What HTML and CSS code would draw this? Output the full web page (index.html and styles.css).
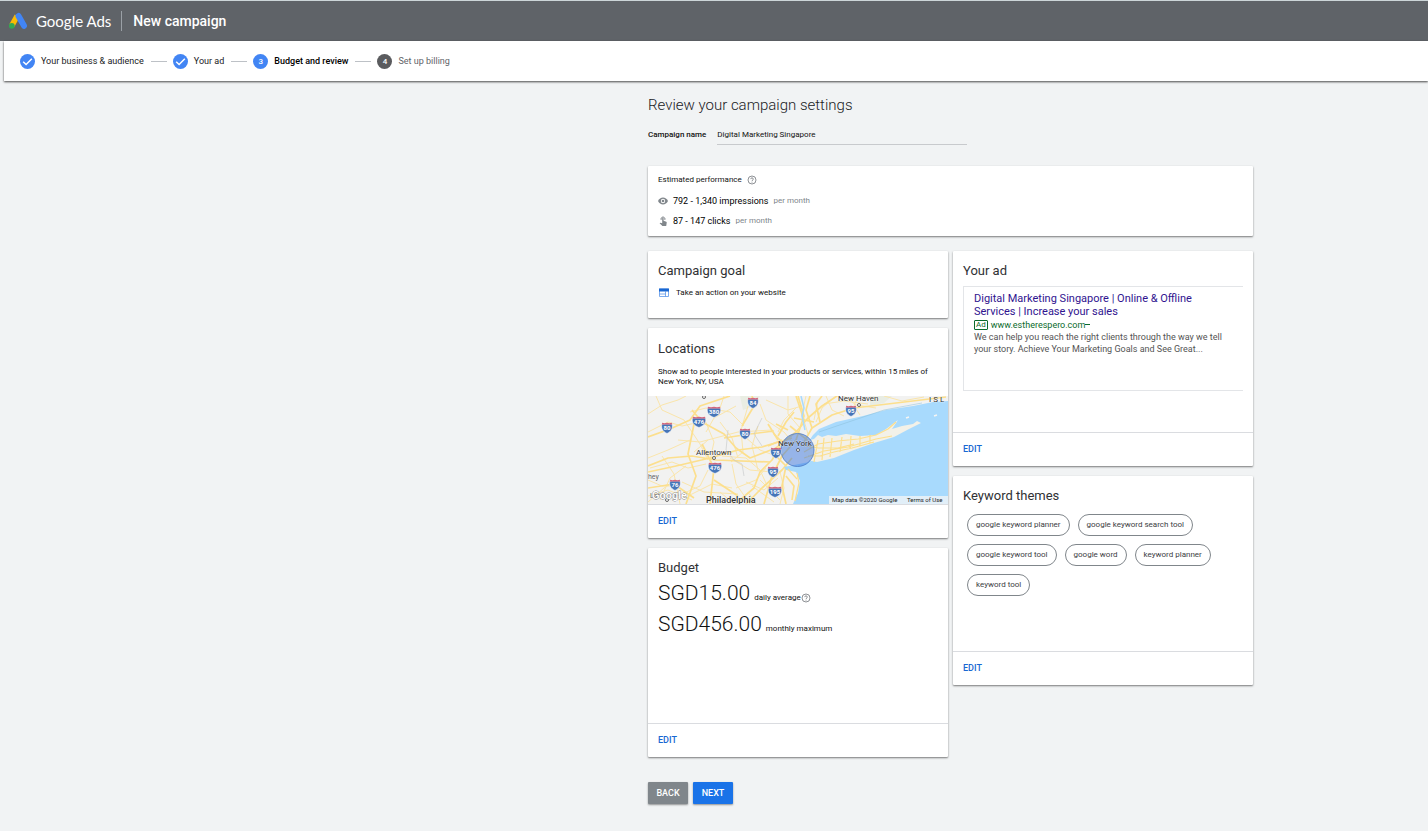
FILE: index.html
```html
<!DOCTYPE html>
<html lang="en">
<head>
  <meta charset="UTF-8" />
  <meta name="viewport" content="width=device-width, initial-scale=1">
  <title>New campaign - Google Ads</title>
  <link rel="stylesheet" href="styles.css">
</head>
<body>

<header class="topbar">
  <svg class="logo" viewBox="0 0 20 18" aria-hidden="true">
    <path d="M9.2 3.8 3.8 13.600" stroke="#fbbc04" stroke-width="5.600" />
    <path d="M10.500 4 16 13.800" stroke="#4285f4" stroke-width="6" stroke-linecap="round" />
    <circle cx="3.8" cy="13.800" r="2.900" fill="#34a853" />
  </svg>
  <span class="brand">Google Ads</span>
  <h1 class="page-title">New campaign</h1>
</header>

<nav class="steps">
  <div class="step">
    <svg class="step-icon" viewBox="0 0 16 16"><circle cx="8" cy="8" r="8" fill="#4285f4" /><path d="M3.4 8.2 6.5 11.2 12.6 5" stroke="#fff" stroke-width="1.6" /></svg>
    <span>Your business &amp; audience</span>
  </div>
  <div class="step">
    <svg class="step-icon" viewBox="0 0 16 16"><circle cx="8" cy="8" r="8" fill="#4285f4" /><path d="M3.4 8.2 6.5 11.2 12.6 5" stroke="#fff" stroke-width="1.6" /></svg>
    <span>Your ad</span>
  </div>
  <div class="step current">
    <span class="step-number">3</span>
    <span>Budget and review</span>
  </div>
  <div class="step next">
    <span class="step-number">4</span>
    <span>Set up billing</span>
  </div>
</nav>

<main class="review">
  <h2 class="review-title">Review your campaign settings</h2>

  <div class="name-row">
    <label for="campaignName">Campaign name</label>
    <input type="text" id="campaignName" value="Digital Marketing Singapore">
  </div>

  <section class="card performance">
    <p class="performance-title">Estimated performance
      <svg class="help" viewBox="0 0 10 10"><circle cx="5" cy="5" r="4" /><path d="M3.7 4.1c0-1.7 2.6-1.7 2.6 0 0 .9-1.3 1-1.3 2M5 6.8v.8" /></svg>
    </p>
    <p class="stat">
      <svg viewBox="0 0 10 10"><path d="M0 5C1 2.8 3 1.6 5 1.6S9 2.8 10 5C9 7.2 7 8.4 5 8.4S1 7.2 0 5z" fill="#80868b" /><circle cx="5" cy="5" r="2.2" fill="#fff" /><circle cx="5" cy="5" r="1.3" fill="#80868b" /></svg>
      <strong>792 - 1,340 impressions</strong> <span>per month</span>
    </p>
    <p class="stat">
      <svg viewBox="0 0 10 10"><path d="M3.2 3.9A2 2 0 1 1 6.8 3.9" stroke="#80868b" /><path d="M4.2 2.2c0-1 1.4-1 1.4 0v2.6l2.7 1c.5.2.5.5.4 1L8.2 10H4.4L1.6 7.2l.6-.5 2 .5z" fill="#80868b" /></svg>
      <strong>87 - 147 clicks</strong> <span>per month</span>
    </p>
  </section>

  <div class="columns">
    <div class="column">
      <section class="card goal">
        <h3>Campaign goal</h3>
        <p class="goal-text">
          <svg viewBox="0 0 12 10"><path d="M1.500 1h9v7.500h-9zM1.500 6h6M7.500 3.500v5" stroke="#5b95e8" stroke-width=".8" /><path d="M1 .500h10v3H1z" fill="#1967d2" /></svg>
          Take an action on your website
        </p>
      </section>

      <section class="card locations">
        <h3>Locations</h3>
        <p class="locations-text">Show ad to people interested in your products or services, within 15 miles of New York, NY, USA</p>
        <svg class="map" viewBox="0 0 300 108" preserveAspectRatio="xMidYMid slice" role="img" aria-label="Map of New York">
          <defs>
            <g id="shield">
              <path d="M-5-4h10c1.300 4-.6 7.500-5 9.500C-4.400 3.500-6.300 0-5-4z" fill="#4675b8" stroke="#fff" stroke-width=".6" />
              <path d="M-4.800-5.200q2.400.8 4.800 0 2.400.8 4.800 0l.4 1.600h-10.400z" fill="#d4667c" />
            </g>
            <g id="wide-shield">
              <path d="M-6.300-4h12.600c1.600 4-.8 7.500-6.300 9.500C-5.500 3.500-7.900 0-6.300-4z" fill="#4675b8" stroke="#fff" stroke-width=".6" />
              <path d="M-6-5.200q3 .8 6 0 3 .8 6 0l.5 1.600h-13z" fill="#d4667c" />
            </g>
          </defs>
          <path d="M0 0h300v108H0z" fill="#f2f2f1" />
          <path class="green" d="M92 0h20l-5 10-12 4zM222 0h22l-8 7-14 3z" />
          <g class="road minor">
            <path d="M0 18 14 9 30 4 38 0M8 0l6 14 22 10 16 24 8 16M30 44l22 2 38-10 34-2M0 62l20-8 22-10M14 60l12 18 6 30M34 86l22 10 34 2M56 22l10 24-4 18M100 10l-7 24 2 22-12 10M112 8l6 16 18 12 10 12M84 68l4 20 14 20M96 40l16 14 16 6M82 62l20 12 22 2M60 74l-8 16-18 8M74 60l24 2 14 12 10 22M158 0l-4 18 6 20M170 4l-4 20M188 0l-14 12-6 14M196 0l12 9 20 3M236 0l18 5 22-4M0 100l20-6 24 10M72 26l12 16 6 20M130 36l6-12 12-12" />
            <path d="M0 36l20-10 14 4 18-4M42 16l16-4 24 4 14 14M118 72l-10 12-20 8M132 76l4 16-4 16M98 86l18 8 14-12M110 30l-6 20 6 24M2 72l22-6 16 6 18-4M12 104l10-22 16-12M46 56l14-12M76 0l-4 12M84 92l-20-4-24 12M118 4l22 10 14-4M140 0v18l12 14M88 10l-22 12-8 14M178 0l6 14 12 6M210 0l-4 10 6 9M176 8l20-3 24 3M0 106l16-14 10-6M0 84l14 6 14 0M100 96l8 12M104 90l22 16M112 84l20 20M72 96l14 12" />
          </g>
          <g class="road">
            <path d="M0 41l22-8 20-9 10-14L82 0M44 14l10 12 22 12 12 14 14 10 26-10 20-16 12-14 14-12 18-12" />
            <path d="M0 76l28-6 34-8 28-8 24-3 30-9M0 92l26-4 20 14M0 70l20-8 24-2 24 4 54 2M62 108l4-36-12-24M104 0l2 10-12 20M116 108l8-28 10-20 14-16 8-24-6-20" />
            <path d="M66 84l24 16M98 108l16-16 20-18 10-12M120 50l14-6M130 44l-10-16M126 58l12 12-4 20 4 18M76 42l26-4 24-3M46 28l-6 30 8 22-10 28M142 30l22 18M146 22l20 4M156 46l8-14 20-13 22-7 42-5 50-6" />
            <path d="M92 104l14-12 6-16 12-12 8-14M130 40l8-14 8-10M134 46l-8-8M140 34l-12-6M138 80l8 10-2 14M148 0l8 24M164 32l-6-18 4-14M172 26l-4-18 6-8" />
          </g>
          <path class="water" d="M300 5l-15 1-20 4-27 4-23 6-27 6-17 7-6 6-4 6v21l-25 5 2 3 10 2 4 9-2 12-5 11h155z" />
          <path d="M153 0l3 12-2 8 3 14" stroke="#a8dafd" stroke-width="1.500" />
          <path class="island" d="M154 52l4-7 8-2 4-4 4 2 6-2 8 1 10-2 14 2 16-1 10-6 12-9-6 9 10-3 11-2 4-3 4 2-12 6-15 8-20 6-20 7-20 8-17 4-10-2z" />
          <g class="road island-roads">
            <path d="M156 56l14-8 20-3 20-2 18-4 12-6 8-7M156 62l20-7 24-4 28-8 16-3M158 50l12 2 20 0 16-4M166 66l4-22M174 64l2-22M182 61l2-19M192 56l2-15M202 53l1-13M212 50v-10M222 47v-8M160 60l12 0 14-4 18-4 22-6" />
            <path d="M149 77l2 10-4 18M140 73l9 10" />
          </g>
          <path d="M171 36l65-22 38-7" stroke="#8abfd9" stroke-width=".5" />
          <path d="M286 20l3-1M258 22l3-1" stroke="#f5f5f3" stroke-width="1.600" />
          <path d="M80 34l-2 20 8 10 8 4 2 12M114 22l-8 16 8 12" stroke="#c3c6c8" stroke-width=".6" />
          <circle cx="149.500" cy="54" r="16.500" fill="#3370dd" fill-opacity=".48" stroke="#4a79c5" stroke-width=".8" />
          <g class="shields">
            <use href="#shield" x="105" y="7" /><text x="105" y="9">84</text>
            <use href="#wide-shield" x="66" y="16" /><text x="66" y="18">380</text>
            <use href="#wide-shield" x="51" y="26" /><text x="51" y="28">476</text>
            <use href="#shield" x="19" y="32" /><text x="19" y="34">80</text>
            <use href="#shield" x="97" y="38" /><text x="97" y="40">80</text>
            <use href="#shield" x="128" y="57" /><text x="128" y="59">78</text>
            <use href="#wide-shield" x="67" y="72" /><text x="67" y="74">476</text>
            <use href="#shield" x="125" y="76" /><text x="125" y="78">95</text>
            <use href="#shield" x="27" y="89" /><text x="27" y="91">76</text>
            <use href="#wide-shield" x="127" y="96" /><text x="127" y="98">195</text>
            <use href="#shield" x="203" y="15" /><text x="203" y="17">95</text>
          </g>
          <g class="towns">
            <circle cx="56" cy="1" r="1.500" /><circle cx="66" cy="62" r="1.500" /><circle cx="211" cy="9" r="1.500" /><circle cx="150" cy="54" r="1.500" /><circle cx="19" cy="104" r="1.500" />
          </g>
          <g class="places">
            <text x="190" y="5">New Haven</text>
            <text x="130" y="50">New York</text>
            <text x="48" y="59">Allentown</text>
            <text x="58" y="107" class="big">Philadelphia</text>
            <text x="0" y="83" class="small">hey</text>
            <text x="281" y="6">I S L</text>
            <text x="2" y="102" class="small">Lancaster</text>
          </g>
          <text x="4" y="103" class="map-logo">Google</text>
          <path d="M181 100h119v8H181z" fill="#f5f5f5" fill-opacity=".75" />
          <text x="184" y="106" class="credit">Map data ©2020 Google</text>
          <text x="259" y="106" class="credit">Terms of Use</text>
        </svg>
        <div class="card-footer"><button class="edit">EDIT</button></div>
      </section>

      <section class="card budget">
        <h3>Budget</h3>
        <p class="amount">SGD15.00 <small>daily average<svg class="help" viewBox="0 0 10 10"><circle cx="5" cy="5" r="4" /><path d="M3.7 4.1c0-1.7 2.6-1.7 2.6 0 0 .9-1.3 1-1.3 2M5 6.8v.8" /></svg></small></p>
        <p class="amount">SGD456.00 <small>monthly maximum</small></p>
        <div class="card-footer"><button class="edit">EDIT</button></div>
      </section>
    </div>

    <div class="column">
      <section class="card your-ad">
        <h3>Your ad</h3>
        <div class="ad-preview">
          <a href="#" class="ad-title">Digital Marketing Singapore | Online &amp; Offline Services | Increase your sales</a>
          <p class="ad-url"><span class="ad-badge">Ad</span>www.estherespero.com<span class="caret"></span></p>
          <p class="ad-text">We can help you reach the right clients through the way we tell your story. Achieve Your Marketing Goals and See Great...</p>
        </div>
        <div class="card-footer"><button class="edit">EDIT</button></div>
      </section>

      <section class="card keywords">
        <h3>Keyword themes</h3>
        <ul class="chips">
          <li>google keyword planner</li>
          <li>google keyword search tool</li>
          <li>google keyword tool</li>
          <li>google word</li>
          <li>keyword planner</li>
          <li>keyword tool</li>
        </ul>
        <div class="card-footer"><button class="edit">EDIT</button></div>
      </section>
    </div>
  </div>

  <div class="actions">
    <button class="btn btn-back">BACK</button>
    <button class="btn btn-next">NEXT</button>
  </div>
</main>

</body>
</html>
```
FILE: styles.css
```css
* {
  box-sizing: border-box;
}
body {
  margin: 0;
  font-family: Roboto, "Liberation Sans", sans-serif;
  font-size: 8px;
  line-height: 10px;
  color: #111;
  background: #f1f3f4;
}
h1, h2, h3, p, ul {
  margin: 0;
  padding: 0;
}
svg {
  fill: none;
  flex-shrink: 0;
}
button, input {
  font-family: inherit;
}

/* top bar */
.topbar {
  display: flex;
  align-items: center;
  height: 41px;
  padding-left: 8px;
  color: #fff;
  background: #5f6368;
  border-top: 1px solid #ccd5d8;
}
.logo {
  width: 20px;
  height: 18px;
  margin-right: 8px;
}
.brand {
  font-family: Lato, sans-serif;
  font-size: 15px;
  line-height: 20px;
  padding-right: 10px;
  border-right: 1px solid #9aa0a6;
}
.page-title {
  margin-left: 11px;
  font-size: 14px;
  font-weight: 500;
  line-height: 20px;
}

/* steps */
.steps {
  display: flex;
  align-items: center;
  height: 40px;
  margin-left: 4px;
  padding-left: 16px;
  font-size: 9px;
  color: #202124;
  background: #fff;
  box-shadow: 0 1px 2px rgba(0, 0, 0, 0.7);
}
.step {
  display: flex;
  align-items: center;
  gap: 6px;
}
.step + .step::before {
  content: "";
  width: 16px;
  margin-left: 7px;
  border-top: 1px solid #bdc1c6;
}
.step-icon, .step-number {
  width: 15px;
  height: 15px;
}
.step-number {
  border-radius: 50%;
  color: #fff;
  background: #4285f4;
  font-size: 8px;
  font-weight: 500;
  line-height: 15px;
  text-align: center;
}
.current {
  color: #000;
  font-weight: 500;
}
.next {
  color: #5f6368;
}
.next .step-number {
  background: #5a5b5e;
}

/* page */
.review {
  max-width: 605px;
  margin: 0 175px 26px auto;
  padding-top: 14px;
}
.review-title {
  font-size: 15px;
  font-weight: 300;
  line-height: 20px;
  color: #202124;
}
.name-row {
  display: flex;
  align-items: center;
  gap: 11px;
  height: 20px;
  margin: 10px 0 21px;
}
.name-row label {
  font-weight: 500;
}
.name-row input {
  width: 250px;
  height: 20px;
  padding: 0;
  border: 0;
  border-bottom: 1px solid #c8cacd;
  outline: none;
  font-size: 8px;
  color: #111;
  background: none;
}

/* cards */
.card {
  display: flex;
  flex-direction: column;
  padding: 10px 10px 0;
  background: #fff;
  border-radius: 1px;
  box-shadow: 0 1px 2px rgba(0, 0, 0, 0.5);
}
.card h3 {
  font-size: 13px;
  font-weight: 400;
  line-height: 20px;
  color: #303134;
}
.card-footer {
  margin: auto -10px 0;
  padding: 6px 10px 7px;
  border-top: 1px solid #dadce0;
}
.edit {
  display: block;
  padding: 0;
  border: 0;
  font-size: 9px;
  font-weight: 500;
  line-height: 20px;
  color: #1967d2;
  background: none;
  cursor: pointer;
}
.help {
  width: 10px;
  height: 10px;
  stroke: #5f6368;
  stroke-width: 0.7;
}
.performance {
  padding: 9px 10px 5px;
}
.performance-title {
  display: flex;
  align-items: center;
  gap: 5px;
  margin-bottom: 6px;
}
.stat {
  display: flex;
  align-items: center;
  gap: 5px;
  height: 20px;
  color: #80868b;
}
.stat svg {
  width: 10px;
  height: 10px;
}
.stat strong {
  font-size: 9px;
  font-weight: 400;
  color: #000;
}
.columns {
  display: grid;
  grid-template-columns: 1fr 1fr;
  gap: 5px;
  align-items: start;
  margin-top: 15px;
}
.column {
  display: flex;
  flex-direction: column;
  gap: 10px;
}
.goal {
  padding-bottom: 20px;
}
.goal-text {
  display: flex;
  align-items: center;
  gap: 6px;
  margin-top: 7px;
}
.goal-text svg {
  width: 12px;
  height: 10px;
}
.locations {
  padding-top: 11px;
}
.locations-text {
  margin: 8px 0 9px;
}
.map {
  display: block;
  width: auto;
  margin: 0 -10px;
}

/* map */
.road path {
  stroke: #fcdf8d;
  stroke-width: 1.7;
  stroke-linejoin: round;
}
.minor path {
  stroke: #fae5ab;
  stroke-width: 1;
}
.island-roads path {
  stroke-width: 1.2;
}
.green {
  fill: #e9ede3;
}
.water {
  fill: #a8dafd;
}
.island {
  fill: #f3f1e8;
}
.shields text {
  font-size: 6px;
  font-weight: 700;
  text-anchor: middle;
  fill: #fff;
}
.towns circle {
  fill: #fff;
  stroke: #444;
  stroke-width: 0.8;
}
.places text {
  font-size: 8px;
  fill: #333;
  stroke: #fff;
  stroke-opacity: 0.4;
  stroke-width: 1;
  paint-order: stroke;
}
.places .big {
  font-size: 9px;
  font-weight: 500;
}
.places .small {
  font-size: 7px;
  fill: #666;
}
.map-logo {
  font-size: 11px;
  font-weight: 500;
  fill: #fff;
  stroke: #888;
  stroke-width: 0.8;
  paint-order: stroke;
}
.credit {
  font-size: 6px;
  fill: #222;
}

/* budget */
.budget {
  min-height: 209px;
}
.amount {
  display: flex;
  align-items: baseline;
  gap: 4px;
  font-size: 21px;
  font-weight: 300;
  line-height: 31px;
}
.amount small {
  display: flex;
  align-items: center;
  font-size: 8px;
  font-weight: 400;
  line-height: 10px;
}

/* ad */
.your-ad {
  min-height: 215px;
}
.ad-preview {
  min-height: 105px;
  margin-top: 5px;
  padding: 5px 20px 5px 10px;
  border: 1px solid #e3e5e8;
  border-right: 0;
}
.ad-title {
  display: block;
  font-size: 11px;
  line-height: 13px;
  color: #30148f;
  text-decoration: none;
}
.ad-url {
  display: flex;
  align-items: center;
  gap: 3px;
  height: 13px;
  font-size: 9px;
  color: #0b6b2c;
}
.ad-badge {
  padding: 0 1px;
  border: 1px solid #0b6b2c;
  border-radius: 1px;
  font-size: 8px;
  line-height: 8px;
}
.caret {
  width: 5px;
  margin-left: -3px;
  border-top: 1px solid #0b6b2c;
}
.ad-text {
  font-size: 9px;
  line-height: 12px;
  color: #545454;
}

/* keywords */
.keywords {
  min-height: 209px;
}
.chips {
  display: flex;
  flex-wrap: wrap;
  gap: 8px;
  margin-top: 8px;
  padding: 0 4px;
  list-style: none;
}
.chips li {
  padding: 5px 8px;
  border: 1px solid #80868b;
  border-radius: 11px;
  color: #3c4043;
}

/* buttons */
.actions {
  display: flex;
  gap: 5px;
  margin-top: 25px;
}
.btn {
  width: 40px;
  height: 22px;
  padding: 0;
  border: 0;
  border-radius: 1px;
  font-size: 9px;
  font-weight: 500;
  color: #fff;
  box-shadow: 0 1px 2px rgba(0, 0, 0, 0.4);
  cursor: pointer;
}
.btn-back {
  background: #80868b;
}
.btn-next {
  background: #1a73e8;
}

@media (max-width: 800px) {
  .review {
    margin: 0 16px 26px;
  }
}
@media (max-width: 520px) {
  .columns {
    grid-template-columns: 1fr;
  }
}
```
